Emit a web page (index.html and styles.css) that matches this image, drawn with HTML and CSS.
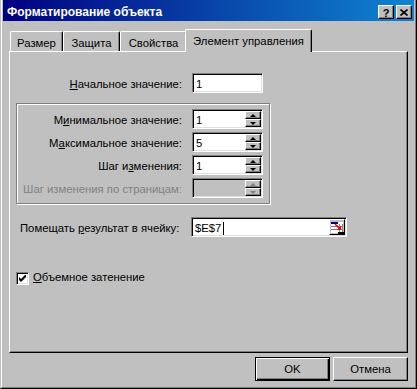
FILE: index.html
```html
<!DOCTYPE html>
<html lang="ru">
<head>
    <meta charset="UTF-8">
    <title>Форматирование объекта</title>
    <link rel="stylesheet" href="styles.css">
</head>
<body>
    <div class="window">
        <div class="frame">
            <div class="titlebar">
                <span class="title">Форматирование объекта</span>
                <div class="caption-buttons">
                    <span class="cap-btn help">?</span>
                    <span class="cap-btn">
                        <svg width="8" height="7" viewBox="0 0 8 7"><path d="M0.5 0.5L7.5 6.5M7.5 0.5L0.5 6.5" stroke="#000" stroke-width="1.6"/></svg>
                    </span>
                </div>
            </div>

            <div class="tabs">
                <div class="tab tab-size">Размер</div>
                <div class="tab tab-protect">Защита</div>
                <div class="tab tab-props">Свойства</div>
                <div class="tab tab-control active">Элемент управления</div>
            </div>

            <div class="panel">
                <div class="row row-start">
                    <span class="label"><u>Н</u>ачальное значение:</span>
                    <div class="field"><span class="value">1</span></div>
                </div>

                <div class="group">
                    <span class="label">М<u>и</u>нимальное значение:</span>
                    <div class="field spin">
                        <span class="value">1</span>
                        <div class="spin-btns"><span class="arrow up"></span><span class="arrow down"></span></div>
                    </div>
                    <span class="label">М<u>а</u>ксимальное значение:</span>
                    <div class="field spin">
                        <span class="value">5</span>
                        <div class="spin-btns"><span class="arrow up"></span><span class="arrow down"></span></div>
                    </div>
                    <span class="label">Шаг и<u>з</u>менения:</span>
                    <div class="field spin">
                        <span class="value">1</span>
                        <div class="spin-btns"><span class="arrow up"></span><span class="arrow down"></span></div>
                    </div>
                    <span class="label disabled">Шаг изменения по страницам:</span>
                    <div class="field spin disabled">
                        <span class="value"></span>
                        <div class="spin-btns"><span class="arrow up"></span><span class="arrow down"></span></div>
                    </div>
                </div>

                <div class="row row-ref">
                    <span class="label">Помещать <u>р</u>езультат в ячейку:</span>
                    <div class="field ref">
                        <span class="value">$E$7<span class="caret"></span></span>
                        <span class="ref-btn">
                            <svg width="14" height="15" viewBox="0 0 14 15" shape-rendering="crispEdges">
                                <rect x="1" y="2" width="12" height="11" fill="#fff"/>
                                <rect x="1" y="2" width="7" height="2" fill="#000080"/>
                                <rect x="1" y="6" width="12" height="1" fill="#808080"/>
                                <rect x="1" y="9" width="12" height="1" fill="#808080"/>
                                <rect x="9" y="4" width="1" height="9" fill="#808080"/>
                                <rect x="12" y="4" width="1" height="9" fill="#808080"/>
                                <rect x="8" y="12" width="6" height="3" fill="#000"/>
                                <path d="M5 4L10 9" stroke="#f00" stroke-width="1.5" shape-rendering="auto"/>
                                <polygon points="11,10 6,10 11,5" fill="#f00"/>
                            </svg>
                        </span>
                    </div>
                </div>

                <div class="check-row">
                    <span class="checkbox">
                        <svg width="7" height="7" viewBox="0 0 7 7"><polygon points="0,2 2,4 7,-1 7,2 2,7 0,5" fill="#000"/></svg>
                    </span>
                    <span class="check-label"><u>О</u>бъемное затенение</span>
                </div>
            </div>

            <div class="buttons">
                <button class="btn default">OK</button>
                <button class="btn">Отмена</button>
            </div>
        </div>
    </div>
</body>
</html>
```

FILE: styles.css
```css
* {
    box-sizing: border-box;
}
body {
    margin: 0;
    font-family: "Liberation Sans", Arial, sans-serif;
    font-size: 11.3px;
    color: #000;
    background: #c0c0c0;
}
.window {
    width: 417px;
    height: 389px;
    background: #c0c0c0;
    border-left: 1px solid #c0c0c0;
    border-right: 1px solid #000;
    border-bottom: 1px solid #000;
}
.frame {
    height: 100%;
    display: flex;
    flex-direction: column;
    border-left: 1px solid #fff;
    border-right: 1px solid #808080;
    border-bottom: 1px solid #808080;
    padding: 0 1px 1px;
}

/* title bar */
.titlebar {
    height: 21px;
    display: flex;
    align-items: center;
    padding: 3px 2px 0 4px;
    background: linear-gradient(to right, #000080, #1084d0);
    color: #fff;
}
.title {
    font-weight: bold;
    font-size: 12px;
}
.caption-buttons {
    margin-left: auto;
    display: flex;
    gap: 2px;
}
.cap-btn {
    width: 16px;
    height: 14px;
    display: flex;
    align-items: center;
    justify-content: center;
    background: #c0c0c0;
    border-top: 1px solid #fff;
    border-left: 1px solid #fff;
    border-right: 1px solid #000;
    border-bottom: 1px solid #000;
    box-shadow: inset -1px -1px #808080;
    color: #000;
}
.cap-btn.help {
    font-weight: bold;
    font-size: 11px;
    padding-top: 1px;
}

/* tabs */
.tabs {
    height: 30px;
    display: flex;
    align-items: flex-end;
    padding-left: 7px;
}
.tab {
    height: 20px;
    display: flex;
    align-items: center;
    justify-content: center;
    padding-top: 2px;
    border-top: 1px solid #fff;
    border-left: 1px solid #fff;
    border-right: 1px solid #000;
    border-radius: 2px 2px 0 0;
    box-shadow: inset -1px 0 #808080;
    background: #c0c0c0;
}
.tab-size {
    width: 53px;
}
.tab-protect {
    width: 57px;
}
.tab-props {
    width: 67px;
}
.tab-control {
    width: 127px;
}
.tab.active {
    height: 23px;
    margin: 0 0 -1px -2px;
    padding-top: 0;
    padding-bottom: 1px;
    position: relative;
    z-index: 1;
}

/* panel */
.panel {
    height: 302px;
    margin: 0 6px;
    border-top: 1px solid #fff;
    border-left: 1px solid #fff;
    border-right: 1px solid #000;
    border-bottom: 1px solid #000;
    box-shadow: inset -1px -1px #808080;
}
.row {
    display: grid;
    column-gap: 10px;
}
.row-start {
    grid-template-columns: 172px 71px;
    margin-top: 21px;
}
.label {
    text-align: right;
    line-height: 13px;
    padding-top: 5px;
    white-space: nowrap;
}
.label.disabled {
    color: #808080;
}
.field {
    height: 20px;
    display: flex;
    background: #fff;
    border-top: 1px solid #808080;
    border-left: 1px solid #808080;
    border-right: 1px solid #fff;
    border-bottom: 1px solid #fff;
    box-shadow: inset 1px 1px #000, inset -1px -1px #dfdfdf;
    padding: 1px;
}
.field.disabled {
    background: #c0c0c0;
}
.value {
    flex: 1;
    line-height: 13px;
    padding: 3px 0 0 2px;
}

/* spinners */
.group {
    width: 254px;
    margin: 10px 0 0 6px;
    display: grid;
    grid-template-columns: 165px 71px;
    column-gap: 10px;
    row-gap: 3px;
    padding: 5px 0;
    border: 1px solid #808080;
    box-shadow: inset 1px 1px #fff, 1px 1px #fff;
}
.spin-btns {
    width: 16px;
    display: flex;
    flex-direction: column;
}
.arrow {
    flex: 1;
    display: flex;
    align-items: center;
    justify-content: center;
    background: #c0c0c0;
    border-top: 1px solid #fff;
    border-left: 1px solid #fff;
    border-right: 1px solid #000;
    border-bottom: 1px solid #000;
    box-shadow: inset -1px -1px #808080;
}
.arrow::after {
    content: "";
    width: 0;
    height: 0;
    border-left: 3px solid transparent;
    border-right: 3px solid transparent;
}
.arrow.up::after {
    border-bottom: 3px solid #000;
}
.arrow.down::after {
    border-top: 3px solid #000;
}
.disabled .arrow.up::after {
    border-bottom-color: #808080;
}
.disabled .arrow.down::after {
    border-top-color: #808080;
}

/* cell reference */
.row-ref {
    grid-template-columns: 161px 156px;
    padding-left: 10px;
    margin-top: 13px;
}
.row-ref .label {
    text-align: left;
}
.caret {
    display: inline-block;
    width: 1px;
    height: 13px;
    margin-left: 2px;
    vertical-align: -3px;
    background: #000;
}
.ref-btn {
    width: 16px;
    display: flex;
    align-items: center;
    justify-content: center;
    background: #c0c0c0;
    border-top: 1px solid #fff;
    border-left: 1px solid #fff;
    border-right: 1px solid #000;
    border-bottom: 1px solid #000;
}

/* checkbox */
.check-row {
    display: flex;
    align-items: center;
    gap: 4px;
    margin: 35px 0 0 6px;
}
.checkbox {
    width: 13px;
    height: 13px;
    display: flex;
    align-items: center;
    justify-content: center;
    background: #fff;
    border-top: 1px solid #808080;
    border-left: 1px solid #808080;
    border-right: 1px solid #fff;
    border-bottom: 1px solid #fff;
    box-shadow: inset 1px 1px #000, inset -1px -1px #dfdfdf;
}
.check-label {
    margin-top: -3px;
}

/* dialog buttons */
.buttons {
    display: flex;
    justify-content: flex-end;
    gap: 3px;
    margin-top: 4px;
    padding-right: 6px;
}
.btn {
    width: 75px;
    height: 24px;
    padding: 0;
    font-family: "Liberation Sans", Arial, sans-serif;
    font-size: 11.3px;
    color: #000;
    background: #c0c0c0;
    border-top: 1px solid #fff;
    border-left: 1px solid #fff;
    border-right: 1px solid #000;
    border-bottom: 1px solid #000;
    box-shadow: inset -1px -1px #808080;
}
.btn.default {
    border: 1px solid #000;
    box-shadow: inset 1px 1px #fff, inset -1px -1px #000, inset -2px -2px #808080;
}
```
